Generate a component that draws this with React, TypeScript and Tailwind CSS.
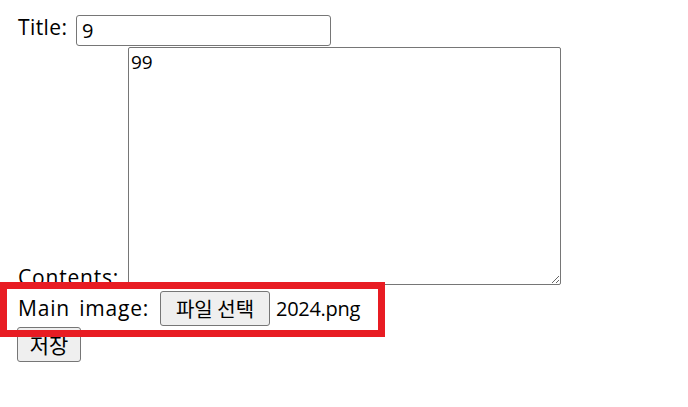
export default function App() {
  return (
    <div className="relative min-h-[407px] w-[688px] bg-white pl-[18px] pt-[15px] font-['Open_Sans','Noto_Sans_CJK_KR',sans-serif] text-[21px] text-black">
      {/* Title */}
      <div className="flex h-[31px] items-start">
        <span className="mt-[2px] w-[58px] tracking-[0.4px] leading-none">Title:</span>
        <input
          defaultValue="9"
          className="h-[31px] w-[255px] rounded-[3px] border border-[#767676] px-[5px] text-[20px] outline-none"
        />
      </div>

      {/* Contents */}
      <div className="mt-[1px] flex items-end pb-[5px]">
        <span className="mb-[-3px] w-[110px] tracking-[0.8px] leading-none">Contents:</span>
        <textarea
          defaultValue="99"
          className="h-[238px] w-[433px] rounded-[2px] border border-[#767676] px-[2px] py-[2px] text-[19px] leading-[24px] outline-none"
        />
      </div>

      {/* Main image */}
      <div className="mt-[1px] flex h-[35px] items-center">
        <span className="w-[142px] tracking-[0.8px] [word-spacing:3px]">Main image:</span>
        <button className="flex h-[35px] w-[110px] items-center justify-center rounded-[3px] border border-[#767676] bg-[#efefef] font-['Noto_Sans_CJK_KR',sans-serif] text-[20px]">
          파일 선택
        </button>
        <span className="ml-[6px] text-[20px] tracking-[-0.3px]">2024.png</span>
      </div>

      {/* Save */}
      <div className="mt-[1px] flex">
        <button className="ml-[-1px] flex h-[35px] w-[64px] items-center justify-center rounded-[3px] border border-[#767676] bg-[#efefef] font-['Noto_Sans_CJK_KR',sans-serif] text-[21px]">
          저장
        </button>
      </div>

      {/* highlight box */}
      <div className="pointer-events-none absolute left-0 top-[282px] h-[55px] w-[385px] border-[7px] border-[#e81c23]" />
    </div>
  );
}
